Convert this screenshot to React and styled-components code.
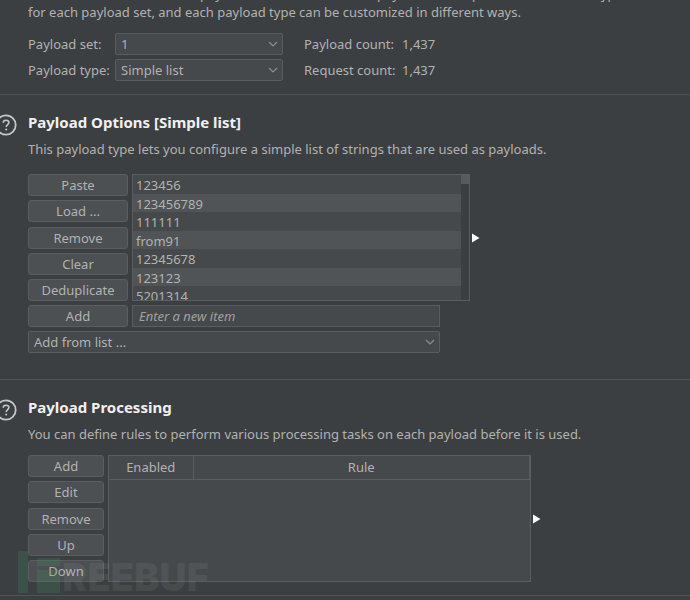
import React, { useState } from 'react';
import styled, { createGlobalStyle } from 'styled-components';

const GlobalStyle = createGlobalStyle`
  * {
    box-sizing: border-box;
  }
  body {
    margin: 0;
    background: #3c3f41;
    color: #b2b2b2;
    font-family: 'Noto Sans', 'Open Sans', sans-serif;
    font-size: 13px;
    line-height: 20px;
    overflow: hidden;
  }
  button, input, select {
    font: inherit;
    color: inherit;
    margin: 0;
  }
`;

const Page = styled.main`
  position: relative;
  overflow: hidden;
`;

const Section = styled.section`
  display: grid;
  grid-template-columns: 28px minmax(0, 1fr);
  padding: ${props => props.$padding};
  border-bottom: 1px solid #505354;
`;

const Body = styled.div`
  grid-column: 2;
`;

const Title = styled.h2`
  margin: 0;
  height: 24px;
  color: #f0f0f0;
  font-size: 15px;
  line-height: 24px;
  font-weight: 700;
`;

const Description = styled.p`
  margin: 5px 0 0;
  white-space: nowrap;
`;

const Intro = styled.p`
  margin: -15px 0 12px;
  line-height: 18px;
  white-space: nowrap;
`;

const HelpButton = styled.button`
  display: flex;
  width: 22px;
  height: 22px;
  margin: 4px 0 0 -5px;
  padding: 0;
  border: 0;
  background: none;
`;

const SetGrid = styled.div`
  display: grid;
  grid-template-columns: 83px 168px 111px max-content;
  gap: 4px;
  align-items: center;
  white-space: nowrap;
`;

const CountLabel = styled.span`
  padding-left: 17px;
`;

const Field = styled.div`
  position: relative;
`;

const Select = styled.select`
  display: block;
  width: 100%;
  height: 22px;
  padding: 0 24px 0 5px;
  border: 1px solid #5a5d5e;
  border-radius: 2px;
  background: #45494b;
  line-height: 20px;
  appearance: none;
`;

const Chevron = styled.svg`
  position: absolute;
  right: 5px;
  top: 8px;
  pointer-events: none;
`;

const Button = styled.button`
  height: 22px;
  padding: 0;
  border: 1px solid #5a5d5e;
  border-radius: 3px;
  background: #4c5052;
  line-height: 20px;
  text-align: center;
`;

const Tools = styled.div`
  display: flex;
  height: 127px;
  margin-top: ${props => props.$gap};
  gap: 4px;
`;

const ButtonColumn = styled.div`
  display: flex;
  flex-direction: column;
  justify-content: space-between;
  width: ${props => props.$width};
`;

const ListBox = styled.div`
  display: flex;
  width: 338px;
  border: 1px solid #5a5d5e;
  overflow: hidden;
`;

const List = styled.ul`
  flex: 1;
  margin: 0;
  padding: 0;
  list-style: none;
`;

const Item = styled.li`
  height: 19px;
  padding-left: 3px;
  line-height: 20px;
  &:nth-child(even) {
    height: 18px;
    background: #505456;
  }
  &:nth-child(odd) {
    background: #45494b;
  }
`;

const ScrollTrack = styled.div`
  width: 8px;
`;

const ScrollThumb = styled.div`
  height: 9px;
  background: #565b5d;
`;

const Expander = styled.button`
  align-self: center;
  display: flex;
  margin-left: -2px;
  padding: 0;
  border: 0;
  background: none;
`;

const AddForm = styled.form`
  display: grid;
  grid-template-columns: 100px minmax(0, 1fr);
  gap: 4px;
  width: 412px;
  margin-top: 4px;
`;

const Input = styled.input`
  height: 22px;
  padding: 0 6px;
  border: 1px solid #5a5d5e;
  background: #45494b;
  &::placeholder {
    color: #a0a0a0;
    font-style: italic;
    opacity: 1;
  }
`;

const ListField = styled(Field)`
  grid-column: 1 / -1;
`;

const TableBox = styled.div`
  width: 423px;
  border: 1px solid #5a5d5e;
  background: #45494b;
`;

const Table = styled.table`
  width: 100%;
  border-collapse: collapse;
  table-layout: fixed;
`;

const Th = styled.th`
  width: ${props => props.$width};
  height: 23px;
  padding: 0;
  border-bottom: 1px solid #5a5d5e;
  border-right: 1px solid #5a5d5e;
  font-weight: 400;
  line-height: 22px;
`;

const Watermark = styled.div`
  position: absolute;
  left: 18px;
  top: 551px;
  display: flex;
  align-items: flex-end;
  pointer-events: none;
`;

const WatermarkText = styled.span`
  padding-left: 1px;
  color: rgba(255, 255, 255, 0.06);
  font-family: Inter, sans-serif;
  font-size: 38px;
  font-weight: 900;
  line-height: 32px;
`;

const Arrow = () => (
  <Chevron width="10" height="7" viewBox="0 0 10 7" fill="none" aria-hidden="true">
    <path d="M1 1L5 5L9 1" stroke="#8c8e8f" strokeWidth="1.2" />
  </Chevron>
);

const Help = () => (
  <HelpButton type="button" aria-label="Help">
    <svg width="22" height="22" viewBox="0 0 22 22" fill="none" stroke="#c4c6c7">
      <circle cx="11" cy="11" r="9.7" strokeWidth="1.8" />
      <path
        d="M8.2 8.8C8.2 7.2 9.4 6.2 11 6.2C12.7 6.2 13.9 7.2 13.9 8.6C13.9 10.5 11.2 10.7 11.2 13"
        strokeWidth="1.6"
      />
      <circle cx="11.2" cy="15.6" r="1" fill="#c4c6c7" stroke="none" />
    </svg>
  </HelpButton>
);

const Expand = () => (
  <Expander type="button" aria-label="Expand">
    <svg width="8" height="10" viewBox="0 0 8 10">
      <path d="M0 0.5V9.5L7.5 5Z" fill="#fff" />
    </svg>
  </Expander>
);

const payloads = ['123456', '123456789', '111111', 'from91', '12345678', '123123', '5201314'];

const listActions = ['Paste', 'Load ...', 'Remove', 'Clear', 'Deduplicate'];
const ruleActions = ['Add', 'Edit', 'Remove', 'Up', 'Down'];

const App = () => {
  const [item, setItem] = useState('');

  return (
    <Page>
      <GlobalStyle />
      <Section $padding="0 0 13px">
        <Body>
          <Intro>
            You can define one or more payload sets. The number of payload sets depends on the
            attack type defined
            <br />
            for each payload set, and each payload type can be customized in different ways.
          </Intro>
          <SetGrid>
            <label htmlFor="payload-set">Payload set:</label>
            <Field>
              <Select id="payload-set">
                <option>1</option>
              </Select>
              <Arrow />
            </Field>
            <CountLabel>Payload count:</CountLabel>
            <span>1,437</span>
            <label htmlFor="payload-type">Payload type:</label>
            <Field>
              <Select id="payload-type">
                <option>Simple list</option>
              </Select>
              <Arrow />
            </Field>
            <CountLabel>Request count:</CountLabel>
            <span>1,437</span>
          </SetGrid>
        </Body>
      </Section>

      <Section $padding="15px 0 26px">
        <Help />
        <Body>
          <Title>Payload Options [Simple list]</Title>
          <Description>
            This payload type lets you configure a simple list of strings that are used as payloads.
          </Description>
          <Tools $gap="15px">
            <ButtonColumn $width="100px">
              {listActions.map(name => (
                <Button type="button" key={name}>{name}</Button>
              ))}
            </ButtonColumn>
            <ListBox>
              <List>
                {payloads.map(payload => (
                  <Item key={payload}>{payload}</Item>
                ))}
              </List>
              <ScrollTrack>
                <ScrollThumb />
              </ScrollTrack>
            </ListBox>
            <Expand />
          </Tools>
          <AddForm onSubmit={e => e.preventDefault()}>
            <Button type="submit">Add</Button>
            <Input
              aria-label="New item"
              placeholder="Enter a new item"
              value={item}
              onChange={e => setItem(e.target.value)}
            />
            <ListField>
              <Select aria-label="Add from list">
                <option>Add from list ...</option>
              </Select>
              <Arrow />
            </ListField>
          </AddForm>
        </Body>
      </Section>

      <Section $padding="15px 0 13px">
        <Help />
        <Body>
          <Title>Payload Processing</Title>
          <Description>
            You can define rules to perform various processing tasks on each payload before it is used.
          </Description>
          <Tools $gap="11px">
            <ButtonColumn $width="76px">
              {ruleActions.map(name => (
                <Button type="button" key={name}>{name}</Button>
              ))}
            </ButtonColumn>
            <TableBox>
              <Table>
                <thead>
                  <tr>
                    <Th $width="84px">Enabled</Th>
                    <Th>Rule</Th>
                  </tr>
                </thead>
              </Table>
            </TableBox>
            <Expand />
          </Tools>
        </Body>
      </Section>

      <Watermark aria-hidden="true">
        <svg width="43" height="42" viewBox="0 0 43 42" fill="#3aa26b" fillOpacity="0.2">
          <path d="M0 0H10V42H0Z" />
          <path d="M19 7H42V15H19Z" />
          <path d="M19 19H42V42H19Z" />
        </svg>
        <WatermarkText>REEBUF</WatermarkText>
      </Watermark>
    </Page>
  );
};

export default App;
